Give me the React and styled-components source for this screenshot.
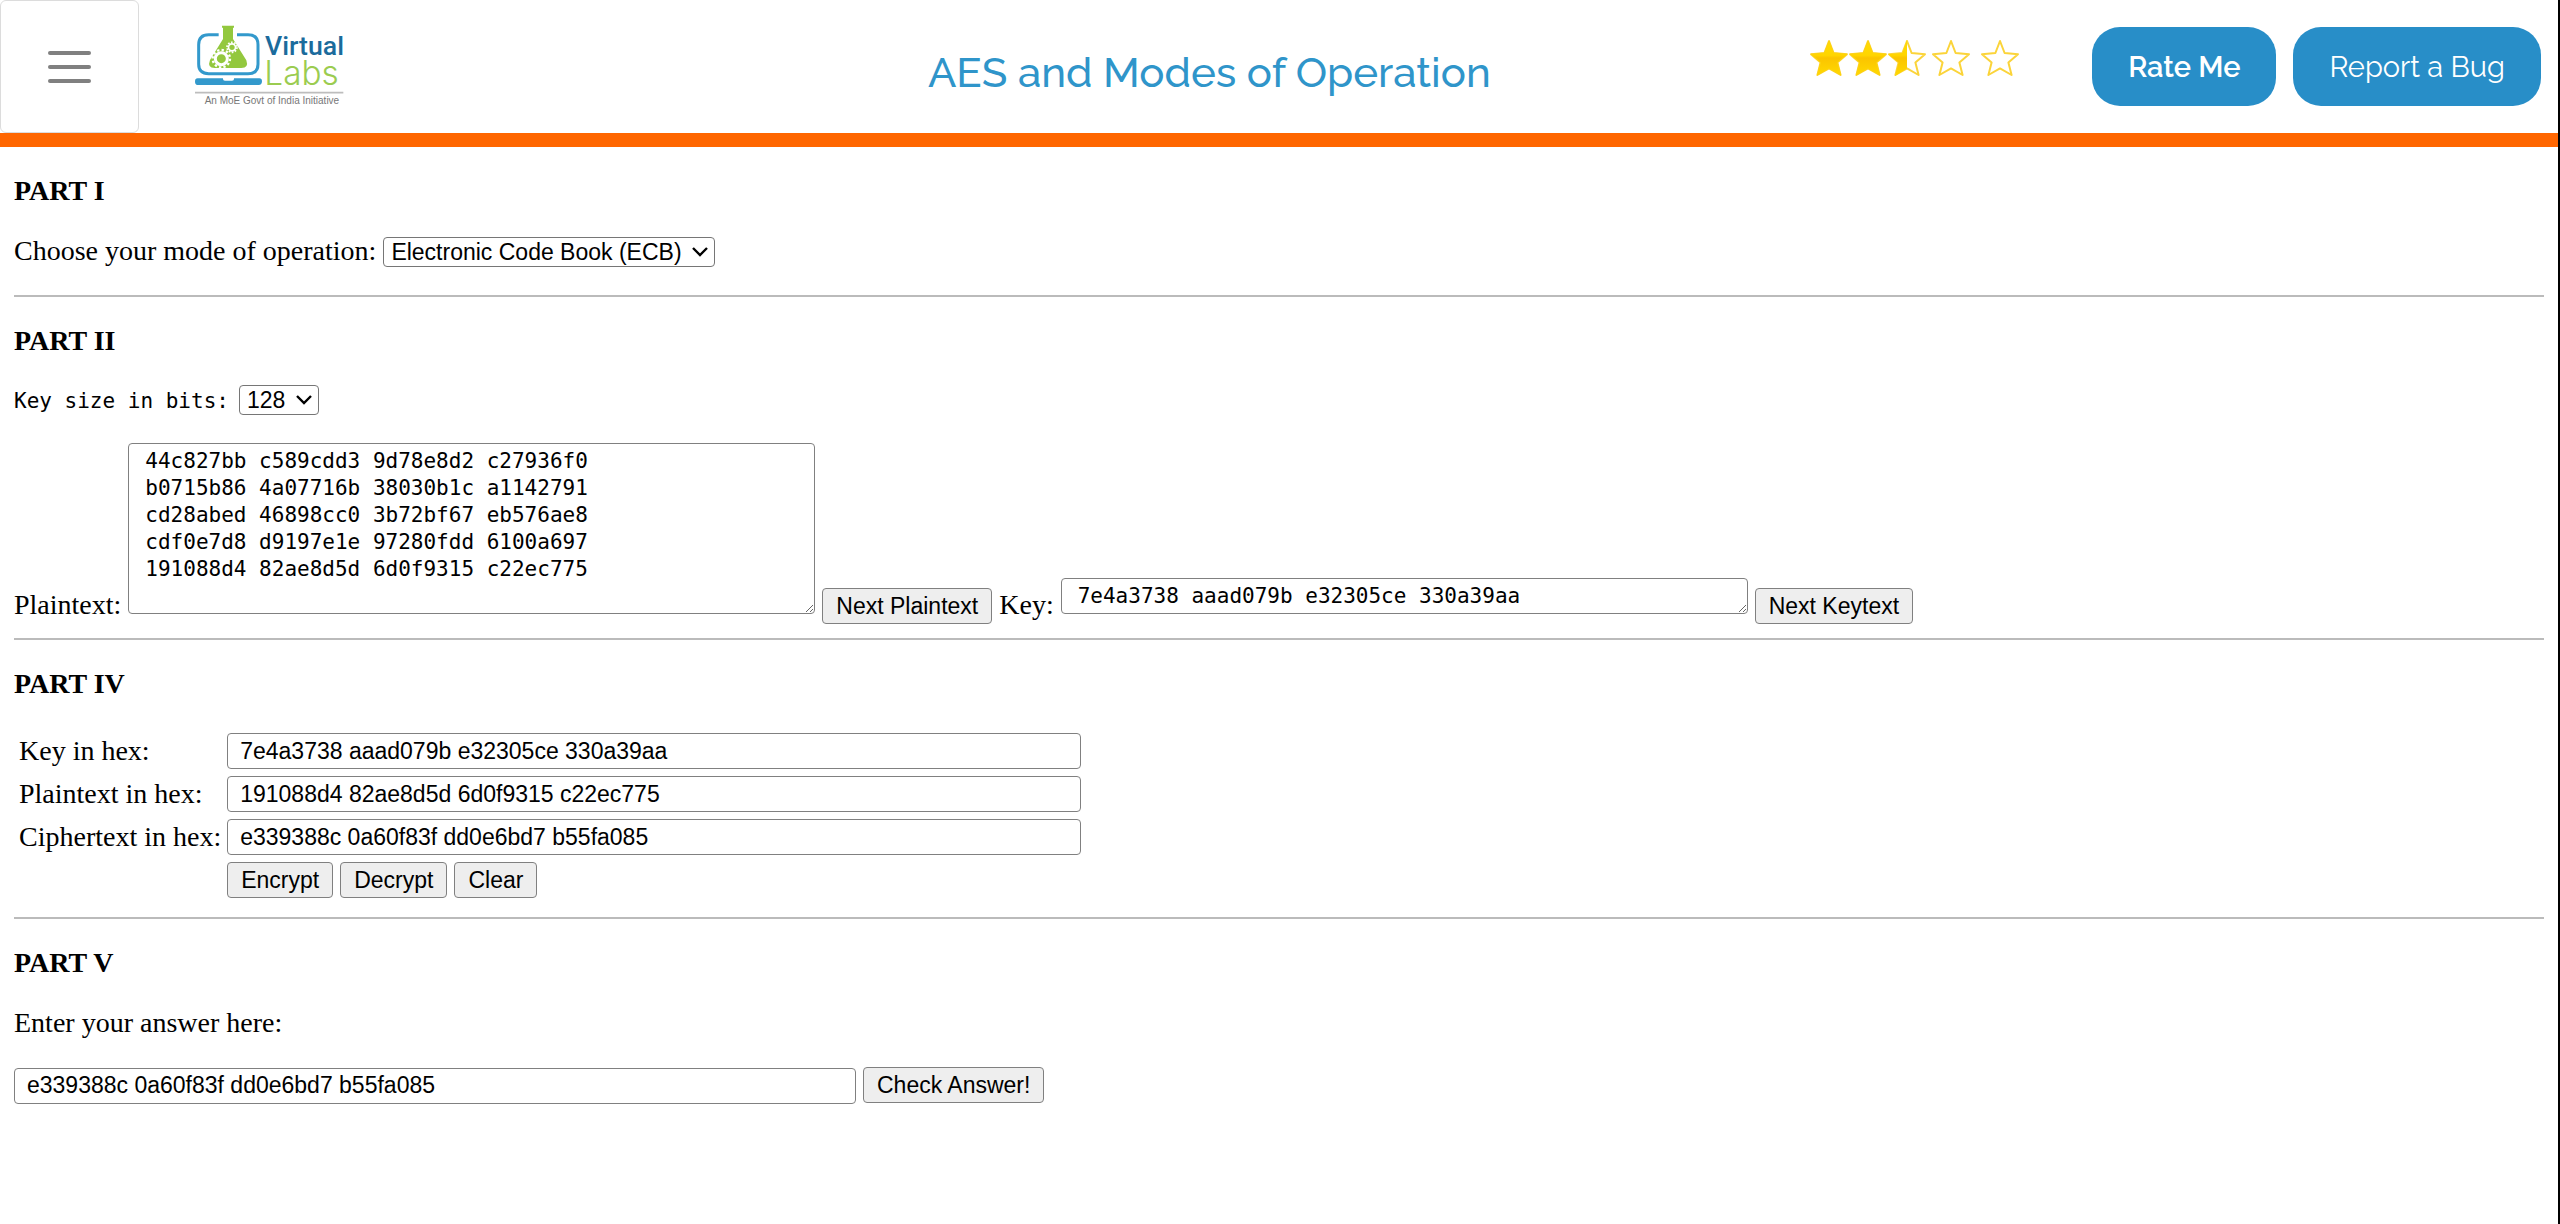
import React, { useState } from "react";
import styled, { createGlobalStyle } from "styled-components";

const GlobalStyle = createGlobalStyle`
  *, *::before, *::after { box-sizing: border-box; }
  body {
    margin: 0;
    background: #fff;
    color: #000;
    font-family: "Liberation Serif", "Times New Roman", serif;
    font-size: 28px;
    line-height: 32px;
  }
`;

const sans = `"Liberation Sans", Arial, sans-serif`;
const mono = `"DejaVu Sans Mono", monospace`;
const brand = `Raleway, Lato, sans-serif`;

const Page = styled.div`
  min-height: 100vh;
  border-right: 2px solid #000;
`;

const Header = styled.header`
  display: grid;
  grid-template-columns: 36% 1fr auto;
  align-items: center;
  height: 147px;
  border-bottom: 14px solid #ff6600;
`;

const HeaderStart = styled.div`
  display: flex;
  align-items: center;
  gap: 56px;
`;

const MenuButton = styled.button`
  display: flex;
  flex-direction: column;
  align-items: center;
  justify-content: center;
  gap: 10px;
  width: 139px;
  height: 133px;
  padding: 0;
  background: #fff;
  border: 1px solid #dcdcdc;
  border-radius: 6px;
`;

const MenuBar = styled.span`
  width: 43px;
  height: 4px;
  border-radius: 2px;
  background: #808080;
`;

const LogoLink = styled.a`
  display: block;
  line-height: 0;
`;

const Title = styled.h1`
  margin: 0;
  padding: 12px 0 0 7px;
  color: #2f95ca;
  font: 500 42px/56px ${brand};
`;

const HeaderEnd = styled.div`
  display: flex;
  align-items: center;
  justify-content: flex-end;
  padding-right: 17px;
`;

const Stars = styled.div`
  display: flex;
  margin: 0 72px 18px 0;
`;

const Star = styled.svg`
  display: block;
  width: 40px;
  height: 38px;
  margin-left: ${(p) => p.$gap}px;
`;

const PillButton = styled.button`
  height: 79px;
  padding: 0 36px;
  margin-left: ${(p) => (p.$wide ? 17 : 0)}px;
  border: 0;
  border-radius: 28px;
  background: #288ec8;
  color: #fff;
  font: ${(p) => (p.$wide ? 400 : 600)} 29px/40px ${brand};
`;

const Main = styled.main`
  padding: 0 14px;
`;

const Section = styled.section`
  display: flex;
  flex-direction: column;
  gap: 28px;
  padding: 28px 0 ${(p) => p.$bottom}px;
  border-bottom: ${(p) => (p.$last ? "0" : "2px solid #bbb")};
`;

const Heading = styled.h2`
  margin: 0;
  font-size: 28px;
  line-height: 32px;
`;

const Row = styled.div`
  display: flex;
  align-items: baseline;
  gap: 7px;
`;

const InlineRow = styled.div`
  display: block;
`;

const Label = styled.label`
  white-space: nowrap;
  ${(p) => p.$mono && `font: 21px/28px ${mono}; margin-right: 3px;`}
`;

const SelectBox = styled.span`
  display: inline-grid;
  align-items: center;
  justify-items: end;
`;

const Select = styled.select`
  grid-area: 1 / 1;
  appearance: none;
  height: 30px;
  padding: 0 32px 0 7px;
  border: 1px solid #767676;
  border-radius: 4px;
  background: #fff;
  color: #000;
  font: 23px/28px ${sans};
`;

const Chevron = styled.svg`
  grid-area: 1 / 1;
  width: 16px;
  height: 10px;
  margin-right: 7px;
  pointer-events: none;
`;

const TextArea = styled.textarea`
  width: 687px;
  margin: 0;
  padding: 4px 16px 3px;
  overflow: hidden;
  border: 1px solid #808080;
  border-radius: 4px;
  background: #fff;
  color: #000;
  font: 21px/27px ${mono};
  vertical-align: baseline;
`;

const TextInput = styled.input`
  width: ${(p) => p.$width}px;
  height: 36px;
  padding: 0 12px;
  border: 1px solid #808080;
  border-radius: 4px;
  background: #fff;
  color: #000;
  font: 23px/32px ${sans};
`;

const Button = styled.button`
  height: 36px;
  padding: 0 13px;
  border: 1px solid #808080;
  border-radius: 4px;
  background: #eee;
  color: #000;
  font: 23px/32px ${sans};
  white-space: nowrap;
`;

const HexForm = styled.form`
  display: grid;
  grid-template-columns: auto 1fr;
  align-items: center;
  gap: 7px 6px;
  padding: 5px 5px 0;
`;

const HexActions = styled(Row)`
  grid-column: 2;
`;

const Paragraph = styled.label`
  display: block;
`;

const STAR_PATH =
  "M20 2 L24.6 14 L38 15.2 L28.4 23.4 L31.6 36 L20 29.4 L8.4 36 L11.6 23.4 L2 15.2 L15.4 14 Z";

function RatingStar({ fill, gap }) {
  return (
    <Star viewBox="0 0 40 38" $gap={gap} aria-hidden="true">
      <defs>
        <linearGradient id={`shine-${fill}`} x1="0" y1="0" x2="0" y2="1">
          <stop offset="0" stopColor="#ffdc00" />
          <stop offset="0.42" stopColor="#ffd500" />
          <stop offset="0.5" stopColor="#fbc400" />
          <stop offset="1" stopColor="#ffd900" />
        </linearGradient>
      </defs>
      <path d={STAR_PATH} fill="#fff" stroke="#fbd43a" strokeWidth="2" strokeLinejoin="round" />
      {fill === "full" && (
        <path d={STAR_PATH} fill="url(#shine-full)" stroke="#ffd30a" strokeWidth="1" />
      )}
      {fill === "half" && (
        <path
          d="M20 1 L15.4 14 L1 15.2 L11.6 23.4 L8 37 L20 29.4 Z"
          fill="url(#shine-half)"
        />
      )}
    </Star>
  );
}

function Logo() {
  return (
    <svg width="150" height="84" viewBox="45 42 450 252" role="img" aria-label="Virtual Labs">
      <g fill="none" stroke="#3399cc" strokeWidth="9">
        <path d="M116 71 H86 Q56 71 56 101 V160 Q56 188 86 188 H204 Q234 188 234 160 V101 Q234 71 204 71 H171" />
      </g>
      <path
        d="M53 202 H129 V204 Q129 209 135 209 H156 Q162 209 162 204 V202 H238 Q246 202 246 211 Q246 222 236 222 H55 Q45 222 45 212 Q45 202 53 202 Z"
        fill="#3399cc"
      />
      <path
        d="M126 44 H162 V50 H159 V84 L199 148 Q207 171 184 171 H104 Q81 171 90 147 L129 84 V50 H126 Z"
        fill="#93c83e"
      />
      <g fill="none" stroke="#fff">
        <circle cx="124" cy="143" r="18" strokeWidth="9" />
        <circle cx="124" cy="143" r="26" strokeWidth="7" strokeDasharray="7 6.6" />
        <circle cx="156" cy="109" r="10.5" strokeWidth="5" />
        <circle cx="156" cy="109" r="15" strokeWidth="5" strokeDasharray="5 4.4" />
      </g>
      <text x="255" y="131" fill="#1b6b9c" fontFamily="Roboto, sans-serif" fontWeight="500" fontSize="80">
        Virtual
      </text>
      <text x="253" y="222" fill="#9bcc50" fontFamily="Inter, sans-serif" fontWeight="300" fontSize="100">
        Labs
      </text>
      <path d="M45 245 H490" stroke="#bdbdbd" strokeWidth="5" />
      <text x="74" y="280" fill="#777" fontFamily="Liberation Sans, Arial, sans-serif" fontSize="30">
        An MoE Govt of India Initiative
      </text>
    </svg>
  );
}

function SelectField({ id, options }) {
  return (
    <SelectBox>
      <Select id={id} defaultValue={options[0]}>
        {options.map((o) => (
          <option key={o}>{o}</option>
        ))}
      </Select>
      <Chevron viewBox="0 0 16 10" aria-hidden="true">
        <path d="M1 1 L8 8 L15 1" fill="none" stroke="#000" strokeWidth="2.4" />
      </Chevron>
    </SelectBox>
  );
}

const PLAINTEXT = [
  "44c827bb c589cdd3 9d78e8d2 c27936f0",
  "b0715b86 4a07716b 38030b1c a1142791",
  "cd28abed 46898cc0 3b72bf67 eb576ae8",
  "cdf0e7d8 d9197e1e 97280fdd 6100a697",
  "191088d4 82ae8d5d 6d0f9315 c22ec775",
].join("\n");

const HEX_FIELDS = [
  { id: "hexKey", label: "Key in hex:", value: "7e4a3738 aaad079b e32305ce 330a39aa" },
  { id: "hexPlain", label: "Plaintext in hex:", value: "191088d4 82ae8d5d 6d0f9315 c22ec775" },
  { id: "hexCipher", label: "Ciphertext in hex:", value: "e339388c 0a60f83f dd0e6bd7 b55fa085" },
];

export default function App() {
  const [hex, setHex] = useState(HEX_FIELDS.map((f) => f.value));

  return (
    <Page>
      <GlobalStyle />
      <Header>
        <HeaderStart>
          <MenuButton type="button" aria-label="Menu">
            <MenuBar />
            <MenuBar />
            <MenuBar />
          </MenuButton>
          <LogoLink href="#">
            <Logo />
          </LogoLink>
        </HeaderStart>
        <Title>AES and Modes of Operation</Title>
        <HeaderEnd>
          <Stars role="img" aria-label="Rated 2.5 of 5">
            <RatingStar fill="full" gap={0} />
            <RatingStar fill="full" gap={-1} />
            <RatingStar fill="half" gap={-1} />
            <RatingStar fill="empty" gap={4} />
            <RatingStar fill="empty" gap={9} />
          </Stars>
          <PillButton type="button">Rate Me</PillButton>
          <PillButton type="button" $wide>
            Report a Bug
          </PillButton>
        </HeaderEnd>
      </Header>

      <Main>
        <Section $bottom={28}>
          <Heading>PART I</Heading>
          <Row>
            <Label htmlFor="mode">Choose your mode of operation:</Label>
            <SelectField id="mode" options={["Electronic Code Book (ECB)"]} />
          </Row>
        </Section>

        <Section $bottom={14}>
          <Heading>PART II</Heading>
          <Row>
            <Label htmlFor="keySize" $mono>
              Key size in bits:
            </Label>
            <SelectField id="keySize" options={["128"]} />
          </Row>
          <InlineRow>
            <Label htmlFor="plaintext">Plaintext:</Label>{" "}
            <TextArea id="plaintext" rows={6} defaultValue={PLAINTEXT} spellCheck={false} />{" "}
            <Button type="button">Next Plaintext</Button>{" "}
            <Label htmlFor="key">Key:</Label>{" "}
            <TextArea
              id="key"
              rows={1}
              defaultValue="7e4a3738 aaad079b e32305ce 330a39aa"
              spellCheck={false}
            />{" "}
            <Button type="button">Next Keytext</Button>
          </InlineRow>
        </Section>

        <Section $bottom={19}>
          <Heading>PART IV</Heading>
          <HexForm onSubmit={(e) => e.preventDefault()}>
            {HEX_FIELDS.map((f, i) => (
              <React.Fragment key={f.id}>
                <Label htmlFor={f.id}>{f.label}</Label>
                <TextInput
                  id={f.id}
                  type="text"
                  $width={854}
                  value={hex[i]}
                  onChange={(e) => setHex(hex.map((v, j) => (j === i ? e.target.value : v)))}
                />
              </React.Fragment>
            ))}
            <HexActions>
              <Button type="button">Encrypt</Button>
              <Button type="button">Decrypt</Button>
              <Button type="button" onClick={() => setHex(["", "", ""])}>
                Clear
              </Button>
            </HexActions>
          </HexForm>
        </Section>

        <Section $bottom={28} $last>
          <Heading>PART V</Heading>
          <Paragraph htmlFor="answer">Enter your answer here:</Paragraph>
          <Row>
            <TextInput
              id="answer"
              type="text"
              $width={842}
              defaultValue="e339388c 0a60f83f dd0e6bd7 b55fa085"
            />
            <Button type="button">Check Answer!</Button>
          </Row>
        </Section>
      </Main>
    </Page>
  );
}
